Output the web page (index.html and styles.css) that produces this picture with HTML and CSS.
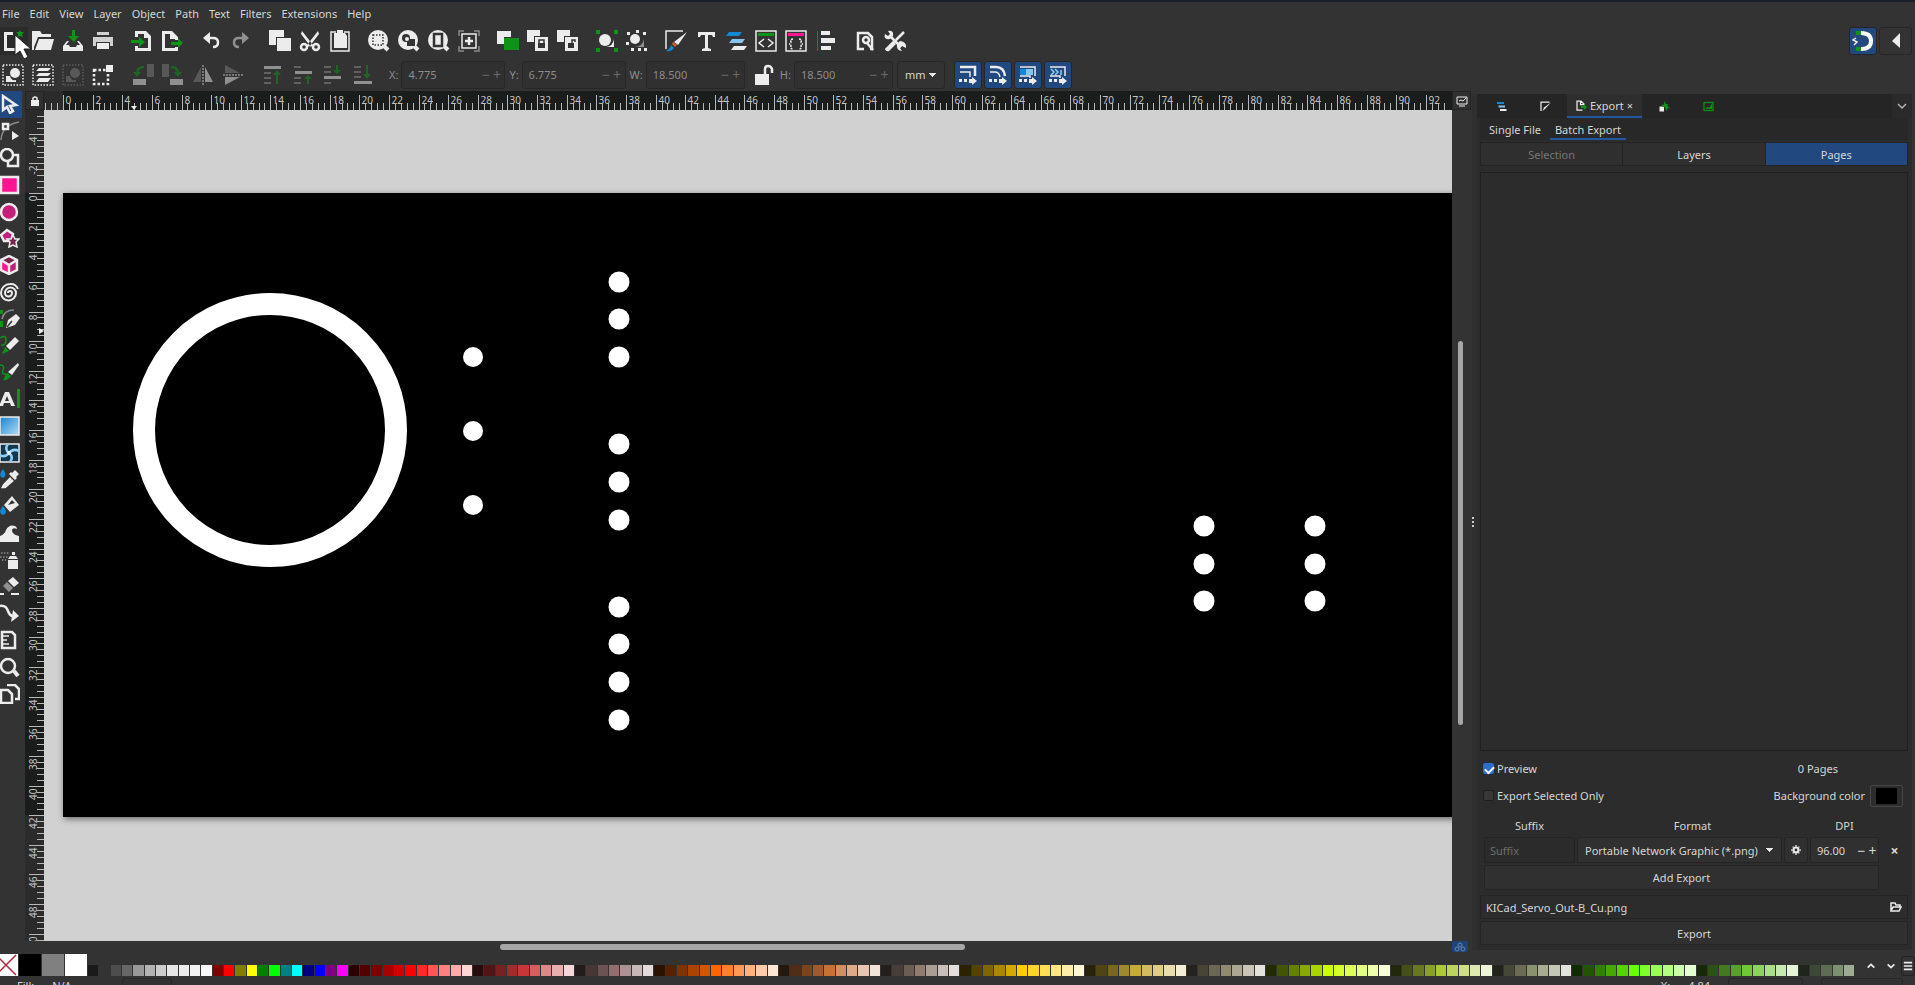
FILE: index.html
```html
<!DOCTYPE html>
<html lang="en">
<head>
    <meta charset="utf-8">
    <title>Inkscape</title>
    <link rel="stylesheet" href="styles.css">
</head>
<body>
    <div class="app">
        <nav class="menubar">
            <a href="#">File</a>
            <a href="#">Edit</a>
            <a href="#">View</a>
            <a href="#">Layer</a>
            <a href="#">Object</a>
            <a href="#">Path</a>
            <a href="#">Text</a>
            <a href="#">Filters</a>
            <a href="#">Extensions</a>
            <a href="#">Help</a>
        </nav>

        <div class="commandbar">
            <div class="group">
                <button class="icon-button hovered" aria-label="New"><svg viewBox="0 0 22 22"><path d="M2 2h9v3h-6v13h11v-8h3v11h-17z"/><path class="green" d="M18 0l1 2 3 0-2 2 1 3-3-1-3 1 1-3-2-2 3 0z"/></svg></button>
                <button class="icon-button" aria-label="Open"><svg viewBox="0 0 22 22"><path d="M0 1h8l2 3h9v3H6L2 17v3H0z"/><path d="M7 9h15l-3 11H3z"/></svg></button>
                <button class="icon-button" aria-label="Save"><svg viewBox="0 0 22 22"><path class="green" d="M10 0h3v6h4l-5 6-6-6h4z"/><path d="M5 11l-4 5v5h20v-5l-4-5h-2l3 4h-3l-1 2H8l-1-2H4l3-4z"/></svg></button>
                <button class="icon-button" aria-label="Print"><svg viewBox="0 0 22 22"><path d="M5 2h12v3H5zM1 7h20v9h-3v-4H4v4H1z" opacity=".85"/><path d="M5 13h12v6H5z"/></svg></button>
            </div>
            <div class="group">
                <button class="icon-button" aria-label="Import"><svg viewBox="0 0 22 22"><path d="M4 1h11l5 5v15H4v-5h3v2h10V8h-4V4H7v3H4z"/><path class="green" d="M0 10h8V7l6 5-6 5v-4H0z"/></svg></button>
                <button class="icon-button" aria-label="Export"><svg viewBox="0 0 22 22"><path d="M1 1h10l6 6v3h-3V9h-5V4H4v14h10v-1h3v4H1z"/><path class="green" d="M10 12h7V8l5 5-5 5v-3h-7z"/></svg></button>
            </div>
            <div class="group">
                <button class="icon-button" aria-label="Undo"><svg viewBox="0 0 22 22"><path class="line" d="M5 8h8q5 0 5 4.500t-5 4.500"/><path d="M3 8l7-6v12z"/></svg></button>
                <button class="icon-button dim" aria-label="Redo"><svg viewBox="0 0 22 22"><path class="line" d="M17 8H9q-5 0-5 4.500t5 4.500"/><path d="M19 8l-7-6v12z"/></svg></button>
            </div>
            <div class="group">
                <button class="icon-button" aria-label="Copy"><svg viewBox="0 0 22 22"><path d="M0 0h15v7H7v8H0z"/><path d="M8 8h14v13H8z"/></svg></button>
                <button class="icon-button" aria-label="Cut"><svg viewBox="0 0 22 22"><path d="M3 1l11 14-2 2L2 4zM19 1l-11 14 2 2L20 4z"/><circle class="line" cx="5" cy="17" r="3"/><circle class="line" cx="17" cy="17" r="3"/></svg></button>
                <button class="icon-button" aria-label="Paste"><svg viewBox="0 0 22 22"><path class="thin" d="M7 2H2v19h18V2h-5"/><path d="M8 0h6v3h2l2 3v12H5V3h3z"/></svg></button>
            </div>
            <div class="group">
                <button class="icon-button" aria-label="Zoom selection"><svg viewBox="0 0 22 22"><circle cx="10" cy="10" r="10"/><path class="thick" d="M16 16l4 4"/><rect class="dots dark" x="5" y="5" width="10" height="10"/></svg></button>
                <button class="icon-button" aria-label="Zoom drawing"><svg viewBox="0 0 22 22"><circle cx="10" cy="10" r="10"/><path class="thick" d="M16 16l4 4"/><circle class="hole" cx="8" cy="8" r="4"/><path class="hole" d="M9 9h8v7H9z"/><circle cx="9" cy="9" r="2"/></svg></button>
                <button class="icon-button" aria-label="Zoom page"><svg viewBox="0 0 22 22"><circle cx="10" cy="10" r="10"/><path class="thick" d="M16 16l4 4"/><rect class="line dark" x="6" y="4" width="8" height="12"/></svg></button>
                <button class="icon-button" aria-label="Zoom centre page"><svg viewBox="0 0 22 22"><path class="thin gray-line" d="M1 6V1h5M16 1h5v5M21 16v5h-5M6 21H1v-5"/><rect class="thin" x="4" y="4" width="14" height="14"/><path class="line" d="M11 7v8M7 11h8"/></svg></button>
            </div>
            <div class="group">
                <button class="icon-button" aria-label="Duplicate"><svg viewBox="0 0 22 22"><path d="M0 1h14v6H7v7H0z"/><path class="green" d="M7 8h15v12H7z"/></svg></button>
                <button class="icon-button" aria-label="Clone"><svg viewBox="0 0 22 22"><path d="M0 0h13v6H7v6H0z"/><path d="M8 7h13v14H8z"/><rect class="hole" x="11" y="13" width="7" height="5"/><path class="thin dark" d="M12 13v-3h5v3"/></svg></button>
                <button class="icon-button" aria-label="Unlink clone"><svg viewBox="0 0 22 22"><path d="M0 0h13v6H7v6H0z"/><path d="M8 7h13v14H8z"/><rect class="hole" x="11" y="13" width="6" height="5"/><path class="thin dark" d="M15 13v-3h3v2"/></svg></button>
            </div>
            <div class="group">
                <button class="icon-button" aria-label="Group"><svg viewBox="0 0 22 22"><circle cx="9" cy="10" r="6"/><path d="M18 9v8H10q7-1 8-8z"/><path class="green" d="M0 0h4v4H0zM18 0h4v4h-4zM0 18h4v4H0zM18 18h4v4h-4z"/></svg></button>
                <button class="icon-button" aria-label="Ungroup"><svg viewBox="0 0 22 22"><circle cx="9" cy="9" r="5"/><path d="M18 9v8H9q8-1 9-8z" opacity=".5"/><path d="M1 2h3v3H1zM10 0h3v3h-3zM17 2h3v3h-3zM0 12h3v3H0zM5 18h3v3H5zM12 18h3v3h-3zM18 18h3v3h-3z"/></svg></button>
            </div>
            <div class="group">
                <button class="icon-button" aria-label="Fill and stroke"><svg viewBox="0 0 22 22"><path class="thin" d="M1 19V1h17"/><path d="M22 2l-9 13-4-3z"/><path class="orange" d="M8 12l4 3-2 2-3-3z"/><path class="blue" d="M6 15l3 3q-3 4-8 3 4-2 5-6z"/></svg></button>
                <button class="icon-button" aria-label="Text and font"><svg viewBox="0 0 22 22"><path d="M3 2h17v5h-2l-1-2h-4v13l3 1v2H7v-2l3-1V5H6L5 7H3z"/></svg></button>
                <button class="icon-button" aria-label="Layers and objects"><svg viewBox="0 0 22 22"><path class="blue" d="M4 2h13l-3 4H1z"/><path class="sky" d="M7 9h13l-3 4H4z"/><path d="M9 16h13l-3 4H6z"/></svg></button>
                <button class="icon-button" aria-label="XML editor"><svg viewBox="0 0 22 22"><rect class="thin" x="1" y="1" width="20" height="20"/><path class="green" d="M3 3h16v3H3z"/><path class="thin" d="M9 9l-5 4 5 4M13 9l5 4-5 4"/></svg></button>
                <button class="icon-button" aria-label="Selectors and CSS"><svg viewBox="0 0 22 22"><rect class="thin" x="1" y="1" width="20" height="20"/><path class="pink" d="M3 3h16v3H3z"/><path class="thin dashed" d="M8 9q-3 0-2 3 0 2-2 2 2 0 2 2-1 3 2 3M14 9q3 0 2 3 0 2 2 2-2 0-2 2 1 3-2 3"/></svg></button>
                <button class="icon-button" aria-label="Align and distribute"><svg viewBox="0 0 22 22"><path class="green" d="M2 1h1v20H2z"/><path d="M6 1h9v4H6zM6 8h14v5H6zM6 16h10v4H6z"/></svg></button>
            </div>
            <div class="group">
                <button class="icon-button" aria-label="Document properties"><svg viewBox="0 0 22 22"><path class="line" d="M10 19H4V3h10l4 4v12h-2"/><circle class="line" cx="12" cy="10" r="3"/><path class="line" d="M13 13l6 7"/></svg></button>
                <button class="icon-button" aria-label="Preferences"><svg viewBox="0 0 22 22"><path class="line" d="M20 2L12 10M10 12l-8 8M6 6l11 11"/><path d="M4 1l2 3-2 2-3-2q-2 6 5 5l3-3q1-6-5-5zM13 14q-1 7 5 7l-2-3 2-2 4 2q1-6-6-7zM9 11l3 3-7 7q-3 1-4-2z"/></svg></button>
            </div>
            <div class="snap-group">
                <button class="square-button active" aria-label="Snapping"><svg viewBox="0 0 22 22"><path class="magnet" d="M9 3q10 0 10 8t-10 8"/><path class="green" d="M4 1h5v4H4zM4 17h5v4H4z"/><path class="thin" d="M4 8L1 10l4 2-3 3"/></svg></button>
                <button class="square-button wide" aria-label="Snap options"><svg viewBox="0 0 22 22"><path d="M15 3v15L7 11z"/></svg></button>
            </div>
        </div>

        <div class="controls">
            <div class="group">
                <button class="icon-button" aria-label="Select all"><svg viewBox="0 0 22 22"><rect class="dots" x="1" y="1" width="20" height="20"/><circle cx="13" cy="9" r="5"/><path d="M4 12h4q1 5 6 4v2H4z"/></svg></button>
                <button class="icon-button" aria-label="Select in all layers"><svg viewBox="0 0 22 22"><rect class="dots" x="1" y="1" width="20" height="20"/><path d="M7 4h12l-3 3H4zM7 9h12l-3 3H4zM7 14h12l-3 4H4z"/></svg></button>
                <button class="icon-button faint" aria-label="Deselect"><svg viewBox="0 0 22 22"><rect class="dots" x="1" y="1" width="20" height="20"/><circle cx="13" cy="9" r="5"/><path d="M4 12h4q1 5 6 4v2H4z"/></svg></button>
                <button class="icon-button" aria-label="Touch selection"><svg viewBox="0 0 22 22"><rect class="dots bold" x="2" y="6" width="14" height="14"/><path d="M14 1h7v7h-7z"/></svg></button>
            </div>
            <div class="group dim">
                <button class="icon-button" aria-label="Rotate left"><svg viewBox="0 0 22 22"><path d="M1 15h13v6H1z"/><path d="M15 0h7v13h-7z" opacity=".4"/><path class="line green-line" d="M12 3Q5 3 5 10"/><path class="green" d="M1 8h8l-4 5z"/></svg></button>
                <button class="icon-button" aria-label="Rotate right"><svg viewBox="0 0 22 22"><path d="M8 15h13v6H8z"/><path d="M0 0h7v13H0z" opacity=".4"/><path class="line green-line" d="M9 3q7 0 7 7"/><path class="green" d="M12 8h8l-4 5z"/></svg></button>
                <button class="icon-button" aria-label="Flip horizontal"><svg viewBox="0 0 22 22"><path d="M13 3l8 15h-8z"/><path d="M9 3L1 18h8z" opacity=".4"/><path class="thin dashed" d="M11 1v20"/></svg></button>
                <button class="icon-button" aria-label="Flip vertical"><svg viewBox="0 0 22 22"><path d="M3 13l15 0-15 8z"/><path d="M3 9h15L3 1z" opacity=".4"/><path class="thin dashed" d="M1 11h20"/></svg></button>
            </div>
            <div class="group dim">
                <button class="icon-button" aria-label="Raise to top"><svg viewBox="0 0 22 22"><path d="M2 2h17v3H2z"/><path d="M2 8h7v2H2zM2 13h7v2H2zM2 18h7v2H2z" opacity=".5"/><path class="green" d="M14 20h2v-9h3l-4-5-4 5h3z"/></svg></button>
                <button class="icon-button" aria-label="Raise"><svg viewBox="0 0 22 22"><path d="M3 7h17v3H3z"/><path d="M2 2h7v2H2zM2 13h7v2H2zM2 18h7v2H2z" opacity=".5"/><path class="green" d="M15 20h2v-5h3l-4-4-4 4h3z"/></svg></button>
                <button class="icon-button" aria-label="Lower"><svg viewBox="0 0 22 22"><path d="M2 12h17v3H2z"/><path d="M2 2h7v2H2zM2 7h7v2H2zM2 18h7v2H2z" opacity=".5"/><path class="green" d="M14 1h2v5h3l-4 4-4-4h3z"/></svg></button>
                <button class="icon-button" aria-label="Lower to bottom"><svg viewBox="0 0 22 22"><path d="M2 17h18v3H2z"/><path d="M2 2h7v2H2zM2 7h7v2H2zM2 12h7v2H2z" opacity=".5"/><path class="green" d="M14 1h2v9h3l-4 5-4-5h3z"/></svg></button>
            </div>
            <div class="fields">
                <label for="pos-x">X:</label>
                <span class="spin"><input id="pos-x" value="4.775" disabled><span>−</span><span>+</span></span>
                <label for="pos-y">Y:</label>
                <span class="spin"><input id="pos-y" value="6.775" disabled><span>−</span><span>+</span></span>
                <label for="size-w">W:</label>
                <span class="spin narrow"><input id="size-w" value="18.500" disabled><span>−</span><span>+</span></span>
                <button class="icon-button" aria-label="Lock ratio"><svg viewBox="0 0 22 22"><path d="M3 10h14v11H3z"/><path class="line" d="M13 10V5q0-3 3-3t4 3v4"/></svg></button>
                <label for="size-h">H:</label>
                <span class="spin narrow"><input id="size-h" value="18.500" disabled><span>−</span><span>+</span></span>
                <select class="unit" aria-label="Unit"><option>mm</option></select>
            </div>
            <div class="affect">
                <button class="square-button active" aria-label="Scale stroke width"><svg viewBox="0 0 22 22"><path class="line" d="M3 3h15v9"/><path class="thin" d="M3 8h10v5"/><path d="M2 15h3v3H2zM7 15h3v3H7zM12 15h3v-2l5 4-5 4v-2h-3z"/></svg></button>
                <button class="square-button active" aria-label="Scale rounded corners"><svg viewBox="0 0 22 22"><path class="line" d="M3 3h6q8 0 9 9"/><path class="thin" d="M3 8h5q4 0 5 5"/><path d="M2 15h3v3H2zM7 15h3v3H7zM12 15h3v-2l5 4-5 4v-2h-3z"/></svg></button>
                <button class="square-button active" aria-label="Move gradients"><svg viewBox="0 0 22 22"><path class="thin" d="M3 3h15v9M3 12h10v2"/><path class="blue" d="M3 5h6v6H3z"/><path class="sky" d="M9 5h7v6H9z"/><path d="M2 15h3v3H2zM7 15h3v3H7zM12 15h3v-2l5 4-5 4v-2h-3z"/></svg></button>
                <button class="square-button active" aria-label="Move patterns"><svg viewBox="0 0 22 22"><path class="thin" d="M3 3h15v9M3 12h10v2"/><path class="thin sky-line" d="M4 5l3 3-3 3M8 5l3 3-3 3M14 6v5"/><path d="M2 15h3v3H2zM7 15h3v3H7zM12 15h3v-2l5 4-5 4v-2h-3z"/></svg></button>
            </div>
        </div>

        <main class="workspace">
            <div class="toolbox">
                <button class="tool active" aria-label="Selector"><svg viewBox="0 0 20 20"><path class="line" d="M3 2v14l4-3 3 6 3-2-3-5 6-1z"/></svg></button>
                <button class="tool" aria-label="Node"><svg viewBox="0 0 20 20"><path class="thin gray-line" d="M1 19Q2 4 19 1"/><path class="line hole" d="M3 3h5v5H3z"/><path d="M12 10l7 5-7 4z"/></svg></button>
                <button class="tool" aria-label="Shape builder"><svg viewBox="0 0 20 20"><circle class="line" cx="7" cy="7" r="6"/><path class="line" d="M12 7h6v11H8v-5"/></svg></button>
                <button class="tool" aria-label="Rectangle"><svg viewBox="0 0 20 20"><rect class="line pink" x="1" y="2" width="17" height="16"/></svg></button>
                <button class="tool" aria-label="Ellipse"><svg viewBox="0 0 20 20"><circle class="line rose" cx="9" cy="10" r="8"/></svg></button>
                <button class="tool" aria-label="Star"><svg viewBox="0 0 20 20"><path class="line rose" d="M7 2l6 4-2 7H4L1 7z"/><path class="thin plum" d="M13 7l2 4 4 0-3 3 1 5-4-2-4 2 1-5-3-3 4 0z"/></svg></button>
                <button class="tool" aria-label="3D box"><svg viewBox="0 0 20 20"><path class="plum" d="M9 1l8 4-8 5-8-5z"/><path class="pink" d="M1 5l8 5v9l-8-4z"/><path class="rose" d="M17 5l-8 5v9l8-4z"/><path class="line" d="M9 1l8 4v10l-8 4-8-4V5zM1 5l8 5 8-5M9 10v9"/></svg></button>
                <button class="tool" aria-label="Spiral"><svg viewBox="0 0 20 20"><path class="spiral" d="M8 11a2 2 0 0 1 4 0 3.500 3.500 0 0 1-7 0 5.500 5.500 0 0 1 11 0 7.500 7.500 0 0 1-15 0 9 9 0 0 1 9-9 8 8 0 0 1 8 5"/></svg></button>
                <button class="tool" aria-label="Pen"><svg viewBox="0 0 20 20"><path class="thin gray-line" d="M2 10Q4 1 14 1"/><path class="green" d="M0 1h3v4H0zM0 12h3v6H0z"/><path d="M16 5l4 4-5 7-9 3 2-8z"/><path class="thin dark" d="M7 18l5-6"/></svg></button>
                <button class="tool" aria-label="Pencil"><svg viewBox="0 0 20 20"><path class="thin green-line" d="M0 3q6-4 6 2T1 10"/><path d="M15 2l4 4-9 9-4-4z"/><path class="green" d="M5 12l4 4-7 3z"/></svg></button>
                <button class="tool" aria-label="Calligraphy"><svg viewBox="0 0 20 20"><path class="thin green-line" d="M0 3q5 0 3 5t4 4"/><path d="M18 1l1 2-7 10-4-3z"/><path class="green" d="M7 11l4 3q-3 5-8 4z"/></svg></button>
                <button class="tool" aria-label="Text"><svg viewBox="0 0 20 20"><path d="M5 3h4l6 14h-4l-1-3H4l-1 3H-1zM7 7l-2 5h4z"/><path class="green" d="M17 0h3v19h-3z"/></svg></button>
                <button class="tool" aria-label="Gradient"><svg viewBox="0 0 20 20"><defs><linearGradient id="sheen" x2="1" y2="1"><stop offset="0" stop-color="#1684cf"/><stop offset="1" stop-color="#b4dcf5"/></linearGradient></defs><rect class="thin sheen" x="0" y="1" width="19" height="18"/></svg></button>
                <button class="tool" aria-label="Mesh"><svg viewBox="0 0 20 20"><rect class="thin navy" x="0" y="1" width="19" height="18"/><path class="line sky-line" d="M9 10q-5-4-1-9M9 10q5 4 1 9M9 10Q5 15 0 12M9 10q4-5 10-2"/><circle cx="9" cy="10" r="2"/></svg></button>
                <button class="tool" aria-label="Dropper"><svg viewBox="0 0 20 20"><path class="blue" d="M3 0q5 7 0 9-6-2 0-9z"/><path d="M15 1l4 4-3 3 1 1-2 2-6-6 2-2 1 1z"/><path class="line" d="M11 9l-7 7-1 2 2 0 8-7"/></svg></button>
                <button class="tool" aria-label="Paint bucket"><svg viewBox="0 0 20 20"><path class="blue" d="M3 10q6 7 0 9-6-2 0-9z"/><path d="M12 0l7 9-9 7-6-7z"/><path class="hole" d="M12 4l3 3-7 2z"/></svg></button>
                <button class="tool" aria-label="Tweak"><svg viewBox="0 0 20 20"><path d="M0 19v-6q5-2 6-6 3-6 9-4 2 1 2 3-5-2-5 2 1 4 7 5v6z"/></svg></button>
                <button class="tool" aria-label="Spray"><svg viewBox="0 0 20 20"><path d="M8 10h10v9H8zM10 6h6l2 3H8zM12 2h3v3h-3z"/><path class="dots gray-line" d="M1 3h8M0 7h8M2 10h4"/></svg></button>
                <button class="tool" aria-label="Eraser"><svg viewBox="0 0 20 20"><path d="M13 1l6 6-5 4-6-6z"/><path d="M7 6l6 6-4 4-6-6z" opacity=".5"/><path d="M0 17h4v2H0zM11 17h8v2h-8z"/></svg></button>
                <button class="tool" aria-label="Connector"><svg viewBox="0 0 20 20"><path class="line" d="M0 3q6-1 8 5t7 5"/><path d="M13 7l6 6-8 6z"/></svg></button>
                <button class="tool" aria-label="Measure"><svg viewBox="0 0 20 20"><path class="line" d="M2 2h10l3 3v13H2z"/><path class="thin" d="M3 6h6M3 10h4M3 14h6"/></svg></button>
                <button class="tool" aria-label="Zoom"><svg viewBox="0 0 20 20"><circle class="line" cx="8" cy="9" r="7"/><path class="thick" d="M14 14l4 5"/></svg></button>
                <button class="tool" aria-label="Pages"><svg viewBox="0 0 20 20"><path class="line" d="M1 6h7l4 4v9H1zM7 1h8l4 4v10h-4"/></svg></button>
            </div>

            <div class="canvas-area">
                <button class="corner" aria-label="Lock guides"><svg viewBox="0 0 12 12"><path d="M2 5h8v6H2z"/><path class="line" d="M4 5V3q2-2 4 0v2"/></svg></button>
                <svg class="ruler" id="ruler-x"></svg>
                <button class="corner" aria-label="Display mode"><svg viewBox="0 0 12 12"><path class="thin" d="M1 2h10v7H1zM3 11h6M3 6l2-1 2 1 3-3"/></svg></button>
                <svg class="ruler" id="ruler-y"></svg>
                <svg class="canvas">
                    <rect class="page" x="19" y="83" width="2000" height="624"/>
                    <g class="copper" id="pads">
                        <circle class="ring" cx="226" cy="320" r="126"/>
                    </g>
                </svg>
                <div class="scroll-y"><span></span></div>
                <div class="scroll-x"><span></span></div>
                <button class="cms" aria-label="Colour management"><svg viewBox="0 0 12 10"><circle cx="6" cy="3" r="2"/><circle cx="3" cy="7" r="2"/><circle cx="9" cy="7" r="2"/></svg></button>
            </div>

            <aside class="dock">
                <div class="handle"><i></i><i></i><i></i></div>
                <div class="dialog">
                    <div class="dock-tabs">
                        <button class="dock-tab" aria-label="Layers and objects"><svg viewBox="0 0 22 22"><path class="blue" d="M2 2h14v4H2z"/><path class="sky" d="M5 9h13v4H5z"/><path d="M8 16h13v4H8z"/></svg></button>
                        <button class="dock-tab" aria-label="Fill and stroke"><svg viewBox="0 0 22 22"><path class="line" d="M2 20V2h17"/><path d="M22 3L10 16l-5 4 3-7z"/></svg></button>
                        <button class="dock-tab current"><svg viewBox="0 0 22 22"><path class="line" d="M13 20H2V2h8l6 6v2M9 2v7h6"/><path class="green" d="M10 12h6V8l6 6-6 6v-4h-6z"/></svg>Export<span>×</span></button>
                        <button class="dock-tab" aria-label="Objects"><svg viewBox="0 0 22 22"><path d="M1 11h9v10H1z"/><path class="green" d="M11 0l3 6 5 1-3 3 6 4-5 1-2 5-3-8H6V8l4-1z"/></svg></button>
                        <button class="dock-tab" aria-label="Trace bitmap"><svg viewBox="0 0 22 22"><rect class="line green-line" x="2" y="3" width="18" height="16"/><path class="green" d="M5 16l4-5 3 3 6-9v11z"/></svg></button>
                        <button class="dock-menu" aria-label="Dialog menu"><svg viewBox="0 0 12 12"><path class="thin" d="M2 4l4 4 4-4"/></svg></button>
                    </div>
                    <div class="export">
                        <div class="modes">
                            <button>Single File</button>
                            <button class="current">Batch Export</button>
                        </div>
                        <div class="segments">
                            <button disabled>Selection</button>
                            <button>Layers</button>
                            <button class="current">Pages</button>
                        </div>
                        <div class="preview"></div>
                        <div class="option-row">
                            <label><input type="checkbox" checked>Preview</label>
                            <span class="count">0 Pages</span>
                        </div>
                        <div class="option-row">
                            <label><input type="checkbox">Export Selected Only</label>
                            <label class="background" for="bg">Background color</label>
                            <button class="color" id="bg"></button>
                        </div>
                        <div class="formats">
                            <span>Suffix</span><span>Format</span><span>DPI</span>
                            <input class="suffix" placeholder="Suffix" aria-label="Suffix">
                            <select class="format" aria-label="Format"><option>Portable Network Graphic (*.png)</option></select>
                            <button aria-label="Format settings"><svg class="gear" viewBox="0 0 12 12"><circle class="line" cx="6" cy="6" r="3"/><path class="thin" d="M6 0v2M6 10v2M0 6h2M10 6h2M2 2l1 1M9 9l1 1M10 2L9 3M3 9l-1 1"/></svg></button>
                            <span class="spin"><input value="96.00" aria-label="DPI"><span>−</span><span>+</span></span>
                            <button class="remove" aria-label="Remove">×</button>
                            <button class="add">Add Export</button>
                        </div>
                        <div class="filename">
                            <input value="KICad_Servo_Out-B_Cu.png" aria-label="File name">
                            <button aria-label="Browse"><svg viewBox="0 0 12 12"><path class="thin" d="M1 10V2h4l1 2h4v2M1 10l2-4h8l-2 4z"/></svg></button>
                        </div>
                        <button class="export-button">Export</button>
                    </div>
                </div>
            </aside>
        </main>

        <footer class="palette">
            <button class="big none" aria-label="None"><svg viewBox="0 0 18 22"><path d="M-4 1l20 20M16 1L-4 21"/></svg></button>
            <button class="big black" aria-label="Black"></button>
            <button class="big gray" aria-label="Gray"></button>
            <button class="big white" aria-label="White"></button>
            <div class="swatches" id="swatches"></div>
            <button class="nav" aria-label="Previous row"><svg viewBox="0 0 12 12"><path class="line" d="M2 8l4-4 4 4"/></svg></button>
            <button class="nav" aria-label="Next row"><svg viewBox="0 0 12 12"><path class="line" d="M2 4l4 4 4-4"/></svg></button>
            <button class="nav menu" aria-label="Palette menu"><svg viewBox="0 0 12 12"><path class="line" d="M1 2h10M1 6h10M1 10h10"/></svg></button>
        </footer>

        <div class="statusbar">
            <span>Fill:</span><span>N/A</span><span class="well style"></span>
            <span class="coords">X:</span><span>4.84</span>
            <span class="well zoom"></span><span class="well rotation"></span>
        </div>
    </div>

    <svg class="cursor" viewBox="0 0 18 26"><path d="M1 1v20l5-4 4 8 4-2-4-8h7z"/></svg>

    <script src="script.js"></script>
</body>
</html>
```
FILE: styles.css
```css
* {
    box-sizing: border-box;
}
body {
    margin: 0;
    overflow: hidden;
    background-color: #333;
    color: #d6d6d6;
    font-family: "Noto Sans", sans-serif;
    font-size: 11px;
}
button, input, select {
    font: inherit;
    color: inherit;
    margin: 0;
    padding: 0;
    border: none;
    background: none;
    min-width: 0;
}
button {
    display: flex;
    align-items: center;
    justify-content: center;
}
.app {
    display: flex;
    flex-direction: column;
    height: calc(100vh + 14px);
    border-top: 2px solid #1b1f2c;
}

/* icons */
svg {
    display: block;
    fill: #ececec;
}
.line, .thin, .thick, .dots, .spiral {
    fill: none;
    stroke: #ececec;
    stroke-width: 2.5;
}
.thin {
    stroke-width: 1.5;
}
.thick {
    stroke-width: 4;
}
.spiral {
    stroke-width: 2;
}
.dots {
    stroke-width: 1.5;
    stroke-dasharray: 1.5 1.5;
}
.dots.bold {
    stroke-width: 2.5;
    stroke-dasharray: 2.5 2;
}
.dashed {
    stroke-dasharray: 2 1;
}
.dark {
    stroke: #333;
}
.hole {
    fill: #333;
}
.green {
    fill: #0d9418;
}
.green-line {
    stroke: #0d9418;
}
.gray-line {
    stroke: #8a8a8a;
}
.sky-line {
    stroke: #8fd0f5;
}
.blue {
    fill: #1488d2;
}
.sky {
    fill: #84c6ee;
}
.navy {
    fill: #12384f;
}
.sheen {
    fill: url(#sheen);
}
.orange {
    fill: #c8642c;
}
.pink {
    fill: #ff1493;
}
.rose {
    fill: #c4207a;
}
.plum {
    fill: #7a2450;
}
.magnet {
    fill: none;
    stroke: #fff;
    stroke-width: 4;
}

/* top bars */
.menubar {
    display: flex;
    align-items: center;
    gap: 10px;
    height: 21px;
    padding: 2px 2px 0;
}
.menubar a {
    color: #d6d6d6;
    text-decoration: none;
}
.commandbar, .controls {
    display: flex;
    align-items: center;
    height: 34px;
    margin-left: -2px;
}
.commandbar {
    gap: 9px;
    height: 35px;
}
.controls {
    height: 33px;
}
.group {
    display: flex;
}
.icon-button {
    width: 30px;
    height: 28px;
}
.icon-button svg, .square-button svg {
    width: 22px;
    height: 22px;
}
.hovered {
    background-color: #2b2b2b;
}
.dim {
    opacity: 0.5;
}
.faint {
    opacity: 0.2;
}
.snap-group {
    display: flex;
    gap: 2px;
    margin-left: auto;
    padding-right: 3px;
}
.square-button {
    width: 28px;
    height: 28px;
    border: 1px solid #262626;
    border-radius: 3px;
}
.square-button.wide {
    width: 33px;
}
.active {
    background-color: #21497f;
}
.controls .group {
    margin-right: 10px;
}
.fields {
    display: flex;
    align-items: center;
    gap: 3px;
    color: #8c8c8c;
    margin-left: 1px;
}
.spin {
    display: flex;
    align-items: center;
    width: 104px;
    height: 28px;
    margin-right: 1px;
    padding: 0 2px 0 6px;
    border: 1px solid #272727;
    border-radius: 3px;
    background-color: #303030;
}
.spin.narrow {
    width: 99px;
}
.spin input {
    flex: 1;
    color: inherit;
}
.spin span {
    width: 11px;
    color: #6a6a6a;
    font-size: 14px;
    text-align: center;
}
.fields .icon-button {
    width: 28px;
}
.unit, .format {
    height: 28px;
    border: 1px solid #262626;
    border-radius: 3px;
    color: #d6d6d6;
    appearance: none;
    background: linear-gradient(to bottom left, #e6e6e6 50%, transparent 50%) no-repeat, linear-gradient(to bottom right, #e6e6e6 50%, transparent 50%) no-repeat;
    background-size: 4px 4px;
    background-position: right 11px center, right 7px center;
}
.unit {
    width: 48px;
    padding-left: 7px;
}
.affect {
    display: flex;
    gap: 2px;
    margin-left: 9px;
}

/* workspace */
.workspace {
    display: flex;
    flex: 1;
    min-height: 0;
}
.toolbox {
    display: flex;
    flex-direction: column;
    width: 25px;
    max-height: 616px;
}
.tool {
    flex: 1;
    justify-content: flex-start;
    width: 22px;
}
.tool svg {
    width: 20px;
    height: 20px;
    overflow: hidden;
}
.canvas-area {
    display: grid;
    grid-template-columns: 19px 1fr 20px;
    grid-template-rows: 19px 1fr 12px;
    flex: 1;
    min-width: 0;
}
.corner {
    width: 19px;
    border: 1px solid #242424;
    background-color: #303030;
}
.corner svg {
    width: 12px;
    height: 12px;
}
.corner .line {
    stroke-width: 1.5;
}
.corner .thin {
    stroke-width: 1;
}
.ruler {
    width: 100%;
    height: 100%;
    background-color: #2b2b2b;
    font-size: 10px;
}
.ruler .extent {
    fill: #1b1d1c;
}
.ruler path {
    stroke: #b8b8b8;
    fill: none;
}
.ruler .marker {
    fill: #ececec;
    stroke: none;
}
.ruler text {
    fill: #c4c4c4;
}
.canvas {
    width: 100%;
    height: 100%;
    background-color: #d1d1d1;
}
.page {
    fill: #000;
    filter: drop-shadow(1px 2px 3px rgba(0, 0, 0, 0.5));
}
.copper {
    fill: #fff;
}
.ring {
    fill: none;
    stroke: #fff;
    stroke-width: 22;
}
.scroll-y {
    padding: 231px 0 0 6px;
}
.scroll-y span {
    display: block;
    width: 5px;
    height: 64%;
    border-radius: 3px;
    background-color: #a6a6a6;
}
.scroll-x {
    grid-column: 2;
    padding-top: 3px;
}
.scroll-x span {
    display: block;
    width: 33%;
    height: 6px;
    margin-left: 32.4%;
    border-radius: 3px;
    background-color: #a6a6a6;
}
.cms {
    width: 16px;
    height: 11px;
    border-radius: 2px;
    background-color: #1d4478;
}
.cms svg {
    width: 12px;
    height: 10px;
    fill: none;
    stroke: #6a86b0;
}

/* export dialog */
.dock {
    display: flex;
    width: 443px;
    padding: 3px 3px 3px 0;
}
.handle {
    display: flex;
    flex-direction: column;
    justify-content: center;
    gap: 2px;
    width: 5px;
    background-color: #2f2f2f;
}
.handle i {
    width: 2px;
    height: 2px;
    background-color: #ccc;
}
.dialog {
    display: flex;
    flex-direction: column;
    flex: 1;
    min-width: 0;
    background-color: #2c2c2c;
}
.dock-tabs {
    display: flex;
    height: 24px;
    padding-left: 2px;
    background-color: #252525;
}
.dock-tab {
    width: 44px;
}
.dock-tab svg {
    width: 11px;
    height: 11px;
}
.dock-tab.current {
    gap: 3px;
    width: 75px;
    border-bottom: 2px solid #1f57a0;
    background-color: #2e2e2e;
}
.dock-menu {
    width: 20px;
    margin-left: auto;
    background-color: #2a2a2a;
}
.dock-menu svg {
    width: 12px;
    height: 12px;
    opacity: 0.7;
}
.export {
    display: flex;
    flex-direction: column;
    flex: 1;
    min-height: 0;
    padding: 0 4px 5px 3px;
}
.modes {
    display: flex;
    gap: 4px;
    height: 22px;
    margin-bottom: 2px;
    padding-left: 4px;
    background-color: #282828;
}
.modes button {
    padding: 2px 5px 0;
    border-bottom: 2px solid transparent;
}
.modes .current {
    border-color: #1f57a0;
}
.segments {
    display: flex;
    height: 24px;
    border: 1px solid #232323;
}
.segments button {
    flex: 1;
    background-color: #2f2f2f;
}
.segments button + button {
    border-left: 1px solid #232323;
}
.segments button:disabled {
    color: #757575;
}
.segments .current {
    background-color: #21497f;
}
.preview {
    flex: 1;
    margin: 6px 0 4px;
    border: 1px solid #202020;
}
.option-row {
    display: flex;
    align-items: center;
    height: 27px;
    padding: 0 5px 0 3px;
}
.option-row label {
    display: flex;
    align-items: center;
    gap: 3px;
}
.option-row input {
    width: 11px;
    height: 11px;
    appearance: none;
    border: 1px solid #1e1e1e;
    border-radius: 2px;
    background-color: #383838;
}
.option-row input:checked {
    border-color: #2c6ccc;
    background-color: #2c6ccc;
}
.option-row input:checked::before {
    content: "";
    display: block;
    width: 7px;
    height: 4px;
    margin: 2px 1px;
    border: solid #fff;
    border-width: 0 0 2px 2px;
    transform: rotate(-45deg);
}
.count {
    margin-left: auto;
    padding-right: 65px;
}
.option-row .background {
    margin-left: auto;
    padding-right: 5px;
}
.color {
    width: 33px;
    height: 22px;
    border: 1px solid #484848;
    border-radius: 2px;
    background: #000 content-box;
    padding: 2px 5px;
}
.formats {
    display: grid;
    grid-template-columns: 91px 1fr 24px 69px 27px;
    grid-template-rows: 20px 26px 25px;
    gap: 2px;
    margin: 6px 0 5px;
    padding-left: 4px;
    align-items: center;
    text-align: center;
}
.formats > span:nth-child(2) {
    grid-column: 2 / 4;
}
.formats button, .suffix, .formats .format, .formats .spin {
    width: 100%;
    height: 100%;
    border: 1px solid #242424;
    border-radius: 2px;
    background-color: #303030;
}
.formats .suffix {
    grid-column: 1;
    padding-left: 5px;
    background-color: #2b2b2b;
}
.suffix::placeholder {
    color: #6e6e6e;
}
.formats .format {
    padding-left: 7px;
}
.formats .spin {
    margin: 0;
    padding-right: 0;
}
.formats .spin span {
    color: #d6d6d6;
}
.gear {
    width: 10px;
    height: 10px;
}
.formats .remove {
    border: none;
    background: none;
    font-size: 14px;
    font-weight: bold;
}
.formats .add {
    grid-column: 1 / 5;
}
.filename {
    display: flex;
    height: 24px;
    margin-bottom: 2px;
    padding: 0 5px;
    border: 1px solid #242424;
}
.filename input {
    flex: 1;
}
.filename svg {
    width: 12px;
    height: 12px;
}
.export-button {
    height: 24px;
    border: 1px solid #242424;
    border-radius: 2px;
    background-color: #303030;
}

/* palette */
.palette {
    display: flex;
    align-items: flex-end;
    height: 23px;
}
.big {
    width: 22px;
    height: 22px;
    margin-right: 1px;
}
.none {
    width: 18px;
    background-color: #fff;
}
.none svg {
    width: 18px;
    height: 22px;
    stroke: #b5233c;
    stroke-width: 1.5;
}
.black {
    background-color: #000;
}
.gray {
    background-color: #808080;
}
.white {
    background-color: #fff;
}
.swatches {
    display: flex;
    flex: 1;
    height: 11px;
    margin-right: 6px;
}
.swatches button {
    flex: 1;
    border-right: 1px solid #333;
}
.nav {
    width: 20px;
    height: 20px;
}
.nav svg {
    width: 10px;
    height: 10px;
}
.nav .line {
    stroke-width: 2;
}
.nav.menu {
    width: 14px;
    border: 1px solid #222;
    border-radius: 3px;
}
.statusbar {
    display: flex;
    align-items: flex-start;
    gap: 18px;
    height: 23px;
    padding: 2px 12px 0 17px;
}
.well {
    height: 20px;
    border: 1px solid #272727;
    border-radius: 3px;
}
.well.style {
    width: 50px;
    margin-left: 32px;
}
.coords {
    margin-left: auto;
}
.well.zoom {
    width: 75px;
}
.well.rotation {
    width: 82px;
}
.cursor {
    position: absolute;
    top: 33px;
    left: 14px;
    width: 18px;
    height: 28px;
    fill: #fff;
    stroke: #222;
}
```
FILE: script.js
```js
const NS = 'http://www.w3.org/2000/svg';
const MM = 14.815;

function add(parent, tag, attrs, text) {
    const el = document.createElementNS(NS, tag);
    for (const key in attrs) el.setAttribute(key, attrs[key]);
    if (text !== undefined) el.textContent = text;
    parent.appendChild(el);
}

// five ticks for every 2 mm, a label on each long one
function drawRuler(id, origin, from, to, vertical) {
    const ruler = document.getElementById(id);
    if (vertical) {
        add(ruler, 'rect', { class: 'extent', x: 0, y: origin, width: '100%', height: 42 * MM });
    } else {
        add(ruler, 'rect', { class: 'extent', x: origin, y: 0, width: '100%', height: '100%' });
    }
    let d = '';
    for (let i = from; i <= to; i++) {
        const p = Math.round(origin + i * MM * 0.4) + 0.5;
        const start = i % 5 === 0 ? 4 : 12;
        d += vertical ? `M${start} ${p}H19` : `M${p} ${start}V19`;
        if (i % 5 !== 0) continue;
        const label = i / 5 * 2;
        if (vertical) {
            add(ruler, 'text', { transform: `translate(12 ${p + 2}) rotate(-90)`, 'text-anchor': 'end' }, label);
        } else {
            add(ruler, 'text', { x: p + 2, y: 13 }, label);
        }
    }
    add(ruler, 'path', { d });
    add(ruler, 'path', { class: 'marker', d: vertical ? 'M14 218l5 3-5 3z' : 'M87 15h6l-3 4z' });
}

drawRuler('ruler-x', 19, -3, 233, false);
drawRuler('ruler-y', 83, -13, 126, true);

const pads = [
    [429, [247, 321, 395], 10],
    [575, [172, 209, 247, 334, 372, 410, 497, 534, 572, 610], 10.5],
    [1160, [416, 454, 491], 10.5],
    [1271, [416, 454, 491], 10.5]
];
for (const [cx, rows, r] of pads) {
    for (const cy of rows) add(document.getElementById('pads'), 'circle', { cx, cy, r });
}

const colors = `1a1a1a 333333 4d4d4d 666666 999999 b3b3b3 cccccc e6e6e6 ececec f2f2f2 f9f9f9
800000 ff0000 808000 ffff00 008000 00ff00 008080 00ffff 000080 0000ff 800080 ff00ff
2b0000 550000 800000 aa0000 d40000 ff0000 ff2a2a ff5555 ff8080 ffaaaa ffd5d5
280b0b 501616 782121 a02c2c c83737 d35f5f de8787 e9afaf f4d7d7
241c1c 483737 6c5353 916f6f ac9393 c8b7b7 e3dbdb
2b1100 552200 803300 aa4400 d45500 ff6600 ff7f2a ff9955 ffb380 ffccaa ffe6d5
28170b 502d16 784421 a05a2c c87137 d38d5f deaa87 e9c6af f4e3d7
241f1c 483e37 6c5d53 917c6f ac9d93 c8beb7 e3dedb
2b2200 554400 806600 aa8800 d4aa00 ffcc00 ffd42a ffdd55 ffe680 ffeeaa fff6d5
28220b 504416 786721 a0892c c8ab37 d3bc5f decd87 e9ddaf f4eed7
24221c 484537 6c6753 918a6f aca793 c8c4b7 e3e2db
222b00 445500 668000 88aa00 aad400 ccff00 d4ff2a ddff55 e5ff80 eeffaa f6ffd5
22280b 445016 677821 89a02c abc837 bcd35f cdde87 dde9af eef4d7
22241c 454837 6b6c53 8a916f a7ac93 c4c8b7 e2e3db
112b00 225500 338000 44aa00 55d400 66ff00 7fff2a 99ff55 b3ff80 ccffaa e5ffd5
17280b 2d5016 447821 5aa02c 71c837 8dd35f aade87 c6e9af e3f4d7
1f241c 3e4837 5d6c53 7c916f 9dac93`.split(/\s+/);
for (const color of colors) {
    const swatch = document.createElement('button');
    swatch.style.backgroundColor = '#' + color;
    swatch.setAttribute('aria-label', '#' + color);
    document.getElementById('swatches').appendChild(swatch);
}
```
